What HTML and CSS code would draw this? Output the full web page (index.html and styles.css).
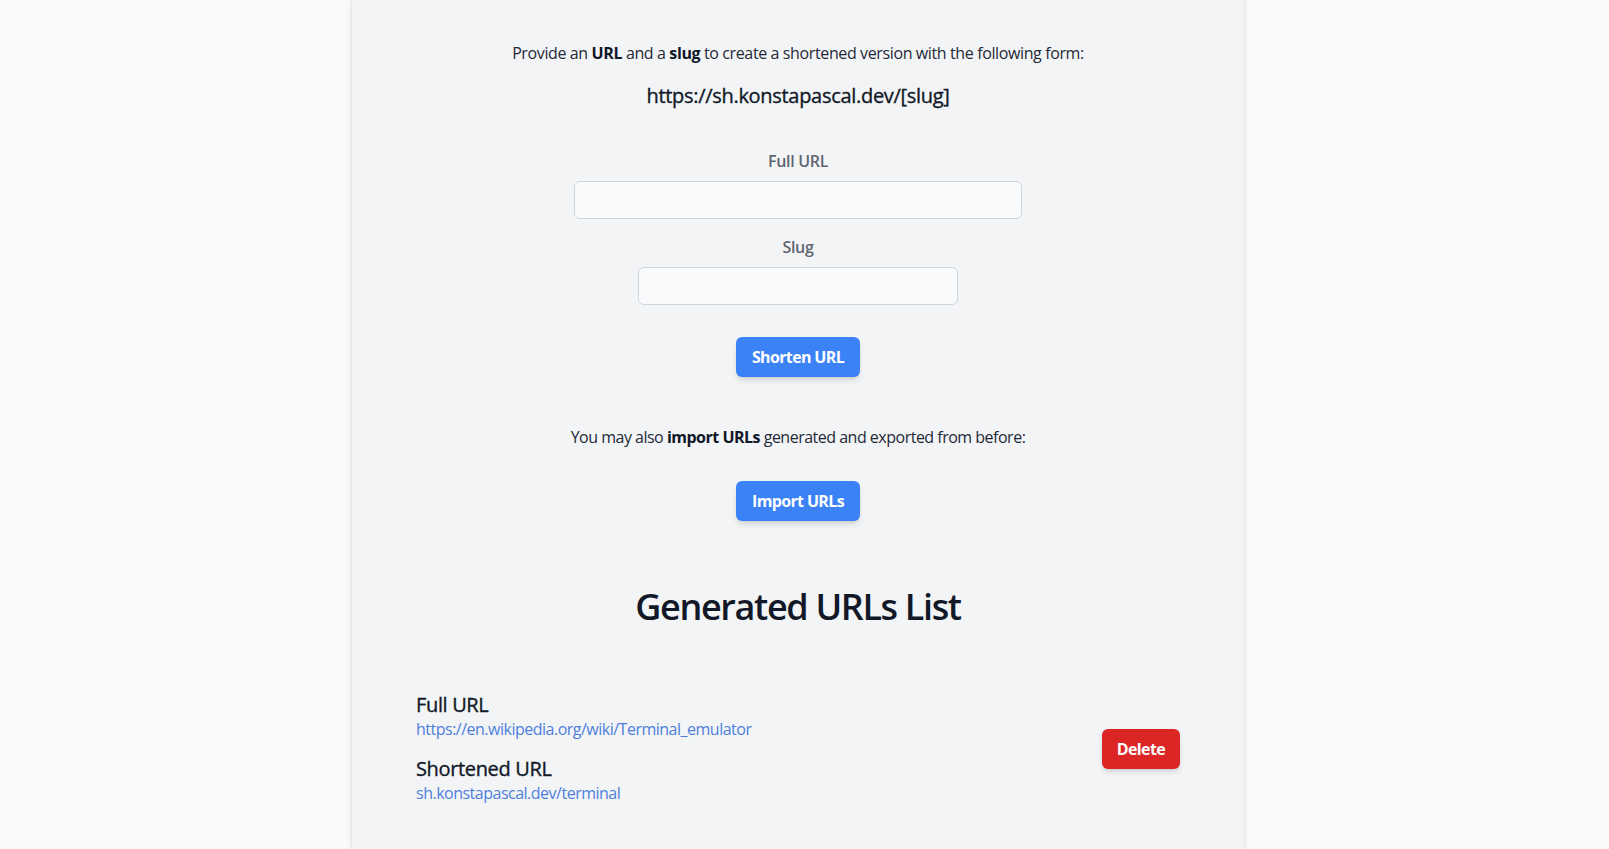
FILE: index.html
```html
<!DOCTYPE html>
<html lang="en">
<head>
<meta charset="utf-8">
<title>URL Shortener</title>
<link rel="stylesheet" href="styles.css">
</head>
<body>
<div class="page">
  <main class="card">
    <section class="intro">
      <p class="lead">Provide an <strong>URL</strong> and a <strong>slug</strong> to create a shortened version with the following form:</p>
      <p class="pattern">https://sh.konstapascal.dev/[slug]</p>
    </section>
    <form class="form">
      <label class="field">
        <span class="label">Full URL</span>
        <input class="input input-wide" type="text">
      </label>
      <label class="field">
        <span class="label">Slug</span>
        <input class="input input-narrow" type="text">
      </label>
      <button type="button" class="btn btn-blue btn-submit">Shorten URL</button>
    </form>
    <section class="import">
      <p class="lead lead-import">You may also <strong>import URLs</strong> generated and exported from before:</p>
      <button type="button" class="btn btn-blue">Import URLs</button>
    </section>
    <h1 class="heading">Generated URLs List</h1>
    <ul class="list">
      <li class="item">
        <div class="item-info">
          <h2 class="item-title">Full URL</h2>
          <a class="item-link" href="#">https://en.wikipedia.org/wiki/Terminal_emulator</a>
          <h2 class="item-title item-title-second">Shortened URL</h2>
          <a class="item-link" href="#">sh.konstapascal.dev/terminal</a>
        </div>
        <button type="button" class="btn btn-red">Delete</button>
      </li>
    </ul>
  </main>
</div>
</body>
</html>
```

FILE: styles.css
```css
* { box-sizing: border-box; }
html, body { margin: 0; padding: 0; }
body {
  background: #f9fafb;
  font-family: "Open Sans", "Noto Sans", sans-serif;
  color: #1f2937;
  height: 849px;
  overflow: hidden;
}
.page {
  padding-right: 13px;
}
.card {
  width: 892px;
  margin: 0 auto;
  min-height: 849px;
  background: #f3f4f6;
  box-shadow: 0 0 6px rgba(0,0,0,0.12), 0 0 1px rgba(0,0,0,0.15);
  padding: 41px 64px 40px;
  display: flex;
  flex-direction: column;
  align-items: center;
}
.intro { text-align: center; }
.lead {
  margin: 0;
  font-size: 16px;
  line-height: 24px;
  color: #1f2937;
  letter-spacing: -0.38px;
}
.lead-import { letter-spacing: -0.5px; }
.lead strong { font-weight: 700; color: #111827; }
.pattern {
  margin: 17px 0 0;
  font-size: 20px;
  line-height: 28px;
  font-weight: 500;
  color: #111827;
  letter-spacing: -0.3px;
  -webkit-text-stroke: 0.35px #111827;
}
.form {
  margin-top: 39px;
  display: flex;
  flex-direction: column;
  align-items: center;
}
.field {
  display: flex;
  flex-direction: column;
  align-items: center;
  gap: 8px;
}
.field + .field { margin-top: 16px; }
.label {
  font-size: 16px;
  line-height: 24px;
  font-weight: 600;
  color: #5f6570;
  letter-spacing: -0.3px;
}
.input {
  height: 38px;
  background: #f9fafb;
  border: 1px solid #d1d5db;
  border-radius: 6px;
  font: inherit;
  padding: 0 12px;
}
.input-wide { width: 448px; }
.input-narrow { width: 320px; }
.btn {
  height: 40px;
  padding: 0 16px;
  border: none;
  border-radius: 6px;
  font-family: inherit;
  font-size: 16px;
  font-weight: 700;
  color: #ffffff;
  letter-spacing: -0.65px;
  box-shadow: 0 4px 6px -1px rgba(0,0,0,0.12), 0 2px 4px -2px rgba(0,0,0,0.1);
  cursor: pointer;
}
.btn-blue { background: #3b82f6; }
.btn-red { background: #dc2626; padding: 0 15px; }
.btn-submit { margin-top: 32px; }
.import {
  margin-top: 48px;
  display: flex;
  flex-direction: column;
  align-items: center;
  gap: 32px;
}
.heading {
  margin: 66px 0 0;
  font-size: 36px;
  line-height: 40px;
  font-weight: 600;
  color: #111827;
  letter-spacing: -1.35px;
}
.list {
  list-style: none;
  margin: 65px 0 0;
  padding: 0;
  width: 100%;
}
.item {
  display: flex;
  align-items: center;
  justify-content: space-between;
}
.item-info {
  display: flex;
  flex-direction: column;
  align-items: flex-start;
}
.item-title {
  margin: 0;
  font-size: 20px;
  line-height: 25px;
  font-weight: 500;
  color: #111827;
  letter-spacing: -0.35px;
  -webkit-text-stroke: 0.35px #111827;
}
.item-title-second { margin-top: 15px; }
.item-link {
  font-size: 16px;
  line-height: 24px;
  color: #4e7fdb;
  text-decoration: none;
  letter-spacing: -0.5px;
}
```
